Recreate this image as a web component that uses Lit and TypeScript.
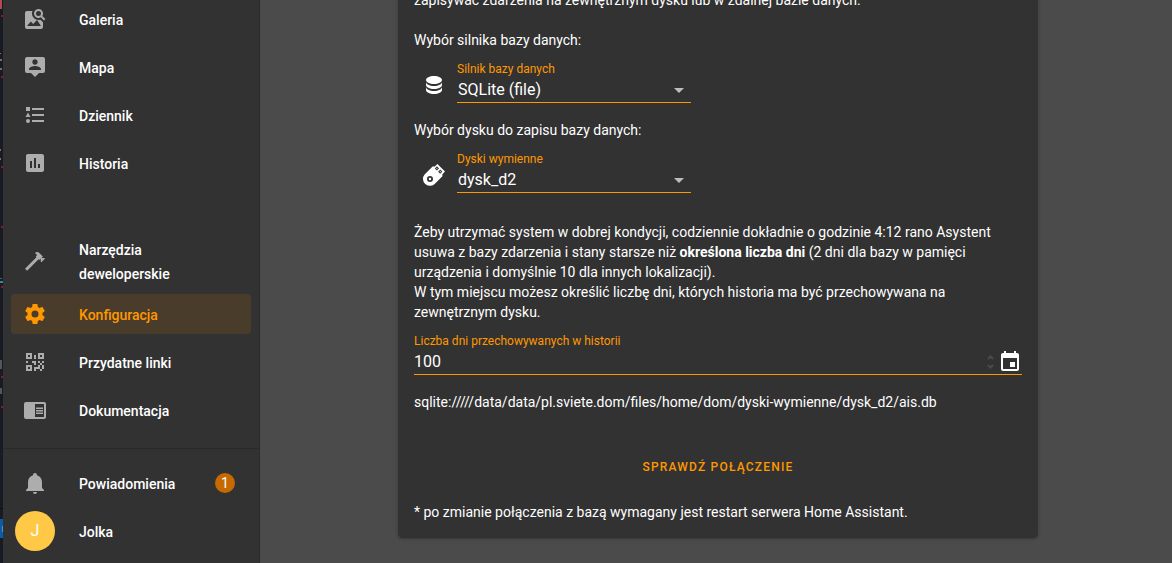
import { LitElement, html, css, svg } from "lit";
import { customElement, property } from "lit/decorators.js";
import { classMap } from "lit/directives/class-map.js";

const ICONS: Record<string, string> = {
  imageSearch:
    "M15.5 2A4.5 4.5 0 0 1 19.3 8.9L22.4 12L21 13.4L17.9 10.3A4.5 4.5 0 1 1 15.5 2M15.5 4A2.5 2.5 0 1 0 15.5 9A2.5 2.5 0 1 0 15.5 4M4 4H9.5A6.5 6.5 0 0 0 15.5 13L17.4 12.7L20 15.2V20A2 2 0 0 1 18 22H4A2 2 0 0 1 2 20V6A2 2 0 0 1 4 4M4 19H18L14 13L10.2 17L7.8 14.5Z",
  tooltipAccount:
    "M20,2H4A2,2 0 0,0 2,4V16A2,2 0 0,0 4,18H8L12,22L16,18H20A2,2 0 0,0 22,16V4A2,2 0 0,0 20,2M12,4.3C13.5,4.3 14.7,5.5 14.7,7C14.7,8.5 13.5,9.7 12,9.7C10.5,9.7 9.3,8.5 9.3,7C9.3,5.5 10.5,4.3 12,4.3M18,15H6V14.1C6,12.1 10,11 12,11C14,11 18,12.1 18,14.1V15Z",
  listType:
    "M5,9.5L7.5,14H2.5L5,9.5M3,4H7V8H3V4M5,20A2,2 0 0,0 7,18A2,2 0 0,0 5,16A2,2 0 0,0 3,18A2,2 0 0,0 5,20M9,5V7H21V5H9M9,19H21V17H9V19M9,13H21V11H9V13Z",
  chartBox:
    "M9 17H7V10H9V17M13 17H11V7H13V17M17 17H15V13H17V17M19 3H5C3.89 3 3 3.89 3 5V19C3 20.11 3.89 21 5 21H19C20.11 21 21 20.11 21 19V5C21 3.89 20.11 3 19 3Z",
  hammer:
    "M2,19.63L13.43,8.2L12.72,7.5L14.14,6.07L12,3.89C13.2,2.7 15.09,2.7 16.27,3.89L19.87,7.5L18.45,8.91H21.29L22,9.62L18.45,13.21L17.74,12.5V9.62L16.27,11.04L15.56,10.33L4.13,21.76L2,19.63Z",
  cog: "M12,15.5A3.5,3.5 0 0,1 8.5,12A3.5,3.5 0 0,1 12,8.5A3.5,3.5 0 0,1 15.5,12A3.5,3.5 0 0,1 12,15.5M19.43,12.97C19.47,12.65 19.5,12.33 19.5,12C19.5,11.67 19.47,11.34 19.43,11L21.54,9.37C21.73,9.22 21.78,8.95 21.66,8.73L19.66,5.27C19.54,5.05 19.27,4.96 19.05,5.05L16.56,6.05C16.04,5.66 15.5,5.32 14.87,5.07L14.5,2.42C14.46,2.18 14.25,2 14,2H10C9.75,2 9.54,2.18 9.5,2.42L9.13,5.07C8.5,5.32 7.96,5.66 7.44,6.05L4.95,5.05C4.73,4.96 4.46,5.05 4.34,5.27L2.34,8.73C2.21,8.95 2.27,9.22 2.46,9.37L4.57,11C4.53,11.34 4.5,11.67 4.5,12C4.5,12.33 4.53,12.65 4.57,12.97L2.46,14.63C2.27,14.78 2.21,15.05 2.34,15.27L4.34,18.73C4.46,18.95 4.73,19.03 4.95,18.95L7.44,17.94C7.96,18.34 8.5,18.68 9.13,18.93L9.5,21.58C9.54,21.82 9.75,22 10,22H14C14.25,22 14.46,21.82 14.5,21.58L14.87,18.93C15.5,18.67 16.04,18.34 16.56,17.94L19.05,18.95C19.27,19.03 19.54,18.95 19.66,18.73L21.66,15.27C21.78,15.05 21.73,14.78 21.54,14.63L19.43,12.97Z",
  qrcode:
    "M3,11H5V13H3V11M11,5H13V9H11V5M9,11H13V15H11V13H9V11M15,11H17V13H19V11H21V13H19V15H21V19H19V21H17V19H13V21H11V17H15V15H17V13H15V11M19,19V15H17V19H19M15,3H21V9H15V3M17,5V7H19V5H17M3,3H9V9H3V3M5,5V7H7V5H5M3,15H9V21H3V15M5,17V19H7V17H5Z",
  bookOpen:
    "M13,12H20V13.5H13M13,9.5H20V11H13M13,14.5H20V16H13M21,4H3A2,2 0 0,0 1,6V19A2,2 0 0,0 3,21H21A2,2 0 0,0 23,19V6A2,2 0 0,0 21,4M21,19H12V6H21",
  bell: "M21,19V20H3V19L5,17V11C5,7.9 7.03,5.17 10,4.29C10,4.19 10,4.1 10,4A2,2 0 0,1 12,2A2,2 0 0,1 14,4C14,4.1 14,4.19 14,4.29C16.97,5.17 19,7.9 19,11V17L21,19M14,21A2,2 0 0,1 12,23A2,2 0 0,1 10,21",
  database:
    "M12,3C7.58,3 4,4.79 4,7C4,9.21 7.58,11 12,11C16.42,11 20,9.21 20,7C20,4.79 16.42,3 12,3M4,9V12C4,14.21 7.58,16 12,16C16.42,16 20,14.21 20,12V9C20,11.21 16.42,13 12,13C7.58,13 4,11.21 4,9M4,14V17C4,19.21 7.58,21 12,21C16.42,21 20,19.21 20,17V14C20,16.21 16.42,18 12,18C7.58,18 4,16.21 4,14Z",
  usb: "M15.4 1L23 8.6L20.4 11.2V13.3L12.4 21.3A7 7 0 0 1 2.6 11.4L10.6 3.6H12.8ZM14.9 3.3L17 5.4L14.9 7.5L12.8 5.4ZM14.9 4.7L14.2 5.4L14.9 6.1L15.6 5.4ZM18.2 6.6L20.3 8.7L18.2 10.8L16.1 8.7ZM18.2 8L17.5 8.7L18.2 9.4L18.9 8.7ZM8 13A3 3 0 1 0 8 19A3 3 0 1 0 8 13M8 14.8A1.2 1.2 0 1 1 8 17.2A1.2 1.2 0 1 1 8 14.8",
  calendar:
    "M19,19H5V8H19M16,1V3H8V1H6V3H5C3.89,3 3,3.89 3,5V19A2,2 0 0,0 5,21H19A2,2 0 0,0 21,19V5C21,3.89 20.1,3 19,3H18V1M17,12H12V17H17V12Z",
  menuDown: "M7,10L12,15L17,10H7Z",
};

@customElement("app-icon")
class AppIcon extends LitElement {
  @property() name = "";
  static styles = css`
    :host {
      display: block;
      width: 24px;
      height: 24px;
      flex: none;
    }
    .glyph {
      display: block;
      width: 100%;
      height: 100%;
      fill: currentColor;
      fill-rule: evenodd;
    }
  `;
  render() {
    return html`<svg class="glyph" viewBox="0 0 24 24" aria-hidden="true">
      ${svg`<path d=${ICONS[this.name]}></path>`}
    </svg>`;
  }
}

interface NavItem {
  icon: string;
  label: string;
  active?: boolean;
}

const MAIN_NAV: NavItem[] = [
  { icon: "imageSearch", label: "Galeria" },
  { icon: "tooltipAccount", label: "Mapa" },
  { icon: "listType", label: "Dziennik" },
  { icon: "chartBox", label: "Historia" },
];

const TOOL_NAV: NavItem[] = [
  { icon: "hammer", label: "Narzędzia deweloperskie" },
  { icon: "cog", label: "Konfiguracja", active: true },
  { icon: "qrcode", label: "Przydatne linki" },
  { icon: "bookOpen", label: "Dokumentacja" },
];

@customElement("app-sidebar")
class AppSidebar extends LitElement {
  static styles = css`
    :host {
      display: flex;
      flex-direction: column;
      justify-content: flex-end;
      box-sizing: border-box;
      overflow: hidden;
      background: #323232;
      border-right: 1px solid #2a2a2a;
      font: 500 14px/24px Roboto, sans-serif;
    }
    .group {
      display: flex;
      flex-direction: column;
      gap: 8px;
      padding: 0 8px;
    }
    .tools {
      padding-top: 53px;
      padding-bottom: 18px;
    }
    .account {
      border-top: 1px solid #292929;
      padding-top: 14px;
      padding-bottom: 12px;
    }
    .item {
      display: flex;
      align-items: center;
      gap: 32px;
      min-height: 40px;
      box-sizing: border-box;
      padding: 0 12px;
      border-radius: 4px;
      color: #fff;
      text-decoration: none;
    }
    .icon {
      color: #adadad;
    }
    .label {
      flex: 1;
      padding: 2px 16px 0 0;
    }
    .item.active {
      background: #4a3c2a;
      color: #ff9800;
    }
    .active .icon {
      color: #ff9800;
    }
    .notices {
      gap: 0;
    }
    .notices .label {
      padding-left: 32px;
    }
    .badge {
      width: 20px;
      border-radius: 10px;
      margin-right: 4px;
      background: #c66900;
      font-weight: 400;
      line-height: 20px;
      text-align: center;
    }
    .user {
      padding-left: 4px;
      gap: 24px;
    }
    .avatar {
      width: 40px;
      border-radius: 50%;
      background: #ffc947;
      font-size: 16px;
      font-weight: 400;
      line-height: 40px;
      text-align: center;
    }
  `;
  private item(n: NavItem) {
    return html`<a href="#" class=${classMap({ item: true, active: !!n.active })}>
      <app-icon class="icon" name=${n.icon}></app-icon>
      <span class="label">${n.label}</span>
    </a>`;
  }
  render() {
    return html`
      <nav class="group">${MAIN_NAV.map((n) => this.item(n))}</nav>
      <nav class="group tools">${TOOL_NAV.map((n) => this.item(n))}</nav>
      <div class="group account">
        <a href="#" class="item notices">
          <app-icon class="icon" name="bell"></app-icon>
          <span class="label">Powiadomienia</span>
          <span class="badge">1</span>
        </a>
        <a href="#" class="item user">
          <span class="avatar">J</span>
          <span class="label">Jolka</span>
        </a>
      </div>
    `;
  }
}

@customElement("database-card")
class DatabaseCard extends LitElement {
  static styles = css`
    :host {
      display: block;
      box-sizing: border-box;
      padding: 16px 16px 15px;
      border-radius: 4px;
      background: #323232;
      box-shadow: 0 2px 2px rgba(0, 0, 0, 0.14), 0 1px 5px rgba(0, 0, 0, 0.12),
        0 3px 1px -2px rgba(0, 0, 0, 0.2);
      color: #fff;
      font: 14px/20px Roboto, sans-serif;
    }
    p {
      margin: 0;
    }
    .intro {
      margin-bottom: 20px;
    }
    .picker {
      display: flex;
      align-items: flex-end;
      gap: 3px;
      padding-top: 8px;
      margin-bottom: 17px;
    }
    .lead {
      padding: 0 8px 6px;
    }
    .field {
      display: grid;
    }
    .picker .field {
      width: 234px;
    }
    .caption {
      padding-top: 2px;
      color: #ff9800;
      font-size: 12px;
      line-height: 18px;
    }
    .control {
      display: grid;
      grid-template-columns: 1fr auto;
      align-items: center;
      border-bottom: 1px solid #ff9800;
    }
    .select,
    .number {
      box-sizing: border-box;
      width: 100%;
      height: 24px;
      margin: 0;
      padding: 0;
      border: 0;
      border-radius: 0;
      outline: 0;
      appearance: none;
      background: none;
      color: inherit;
      font: 16px/24px Roboto, sans-serif;
    }
    .select {
      grid-area: 1 / 1 / 2 / 3;
      padding: 0 1px;
    }
    .arrow {
      grid-area: 1 / 2;
      color: #bdbdbd;
      pointer-events: none;
    }
    .about {
      padding-top: 12px;
      margin-bottom: 8px;
    }
    .number {
      appearance: textfield;
    }
    .number::-webkit-inner-spin-button {
      display: none;
    }
    .days {
      grid-template-columns: 1fr auto auto;
      gap: 4px;
    }
    .spin {
      display: block;
      width: 7px;
      height: 16px;
      fill: none;
      stroke: #4b4b4b;
      stroke-width: 2;
    }
    .url {
      padding: 17px 0 37px;
    }
    .check {
      display: block;
      height: 36px;
      margin: 0 auto 17px;
      padding: 0 8px;
      border: 0;
      background: none;
      color: #ff9800;
      font: 500 12px/36px Roboto, sans-serif;
      letter-spacing: 0.1em;
      text-transform: uppercase;
    }
  `;
  private picker(id: string, icon: string, caption: string, value: string) {
    return html`<div class="picker">
      <app-icon class="lead" name=${icon}></app-icon>
      <div class="field">
        <label class="caption" for=${id}>${caption}</label>
        <div class="control">
          <select class="select" id=${id}>
            <option>${value}</option>
          </select>
          <app-icon class="arrow" name="menuDown"></app-icon>
        </div>
      </div>
    </div>`;
  }
  render() {
    return html`
      <p class="intro">zapisywać zdarzenia na zewnętrznym dysku lub w zdalnej bazie danych.</p>
      <p>Wybór silnika bazy danych:</p>
      ${this.picker("engine", "database", "Silnik bazy danych", "SQLite (file)")}
      <p>Wybór dysku do zapisu bazy danych:</p>
      ${this.picker("drive", "usb", "Dyski wymienne", "dysk_d2")}
      <p class="about">
        Żeby utrzymać system w dobrej kondycji, codziennie dokładnie o godzinie 4:12 rano Asystent
        usuwa z bazy zdarzenia i stany starsze niż <b>określona liczba dni</b> (2 dni dla bazy w
        pamięci urządzenia i domyślnie 10 dla innych lokalizacji).<br />
        W tym miejscu możesz określić liczbę dni, których historia ma być przechowywana na
        zewnętrznym dysku.
      </p>
      <div class="field">
        <label class="caption" for="days">Liczba dni przechowywanych w historii</label>
        <div class="control days">
          <input class="number" id="days" type="number" value="100" />
          <svg class="spin" viewBox="0 0 7 16" aria-hidden="true">
            <path d="M1 5L3.5 2.5L6 5M1 11L3.5 13.5L6 11"></path>
          </svg>
          <app-icon name="calendar"></app-icon>
        </div>
      </div>
      <p class="url">sqlite://///data/data/pl.sviete.dom/files/home/dom/dyski-wymienne/dysk_d2/ais.db</p>
      <button class="check">Sprawdź połączenie</button>
      <p>* po zmianie połączenia z bazą wymagany jest restart serwera Home Assistant.</p>
    `;
  }
}

/* Marks of the editor window that shows behind the left edge: y, height, x, width, colour. */
const EDGE_MARKS: [number, number, number, number, string][] = [
  [0, 9, 0, 2, "#b34a4f"],
  [15, 2, 1, 2, "#8c1c24"],
  [53, 1, 0, 1, "#8a7357"],
  [59, 2, 0, 2, "#6f7074"],
  [68, 2, 0, 2, "#6f7074"],
  [76, 2, 1, 2, "#8c1c24"],
  [149, 2, 0, 1, "#77756f"],
  [158, 2, 0, 1, "#77756f"],
  [166, 2, 1, 2, "#8c1c24"],
  [226, 2, 1, 2, "#8c1c24"],
  [278, 1, 0, 2, "#2f6f76"],
  [281, 2, 0, 3, "#3a8790"],
  [286, 2, 1, 2, "#8c1c24"],
  [360, 9, 0, 2, "#55575e"],
  [376, 2, 1, 2, "#8c1c24"],
  [388, 6, 0, 2, "#55575e"],
  [406, 2, 1, 2, "#8c1c24"],
  [508, 1, 0, 3, "#0d0e12"],
  [519, 19, 0, 3, "#0a5ca8"],
  [526, 6, 2, 1, "#5f8fbd"],
];

@customElement("app-root")
class AppRoot extends LitElement {
  static styles = css`
    :host {
      display: grid;
      grid-template-columns: 3px 257px 1fr;
      grid-template-rows: 100vh;
      overflow: hidden;
      background: #4b4b4b;
    }
    .edge {
      display: block;
      width: 3px;
      height: 100%;
      background: #191b24;
    }
    .main {
      display: flex;
      flex-direction: column;
      justify-content: flex-end;
      align-items: center;
      min-width: 0;
      overflow: hidden;
      padding: 0 0 26px 4px;
    }
    .card {
      width: 100%;
      max-width: 640px;
    }
  `;
  render() {
    return html`
      <svg class="edge" aria-hidden="true">
        ${EDGE_MARKS.map(
          ([y, h, x, w, c]) => svg`<rect x=${x} y=${y} width=${w} height=${h} fill=${c}></rect>`
        )}
      </svg>
      <app-sidebar></app-sidebar>
      <main class="main"><database-card class="card"></database-card></main>
    `;
  }
}
